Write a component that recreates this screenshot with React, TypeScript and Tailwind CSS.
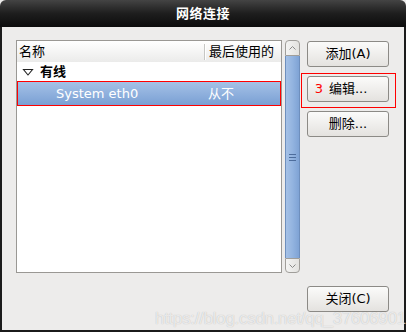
const cjk = "font-['DejaVu_Sans','Noto_Sans_CJK_SC',sans-serif]"

function Btn({ children, className = '' }: { children: React.ReactNode; className?: string }) {
  return (
    <button
      className={`w-[82px] h-[26px] rounded-[3px] border border-[#8c8a86] bg-gradient-to-b from-[#fbfbfa] to-[#e4e2df] text-[13px] text-black flex items-center justify-center ${className}`}
    >
      {children}
    </button>
  )
}

export default function App() {
  return (
    <div className={`w-[406px] h-[332px] bg-[#edeceb] ${cjk} flex flex-col relative overflow-hidden`}>
      {/* title bar */}
      <div className="h-[27px] shrink-0 rounded-t-[6px] bg-gradient-to-b from-[#444] via-[#1e1e1e] to-[#0c0c0c] flex items-center justify-center">
        <span className="text-white font-bold text-[13px] tracking-[0.5px]">网络连接</span>
      </div>
      <div className="flex-1 border-x-2 border-b-2 border-[#1b1b1b] flex flex-col">
        <div className="flex pl-[14px] pt-[13px]">
          {/* list */}
          <div className="w-[266px] h-[233px] border border-[#9a9894] bg-white flex flex-col">
            <div className="h-[21px] flex items-center bg-gradient-to-b from-white to-[#ebebea] text-[13px] text-black">
              <div className="w-[187px] pl-[2px]">名称</div>
              <div className="w-[2px] h-[16px] border-l border-[#c6c6c4] bg-white mr-[3px]" />
              <div>最后使用的</div>
            </div>
            <div className="h-[19px] flex items-center text-[13px] font-bold">
              <svg width="12" height="10" viewBox="0 0 12 10" className="ml-[5px] mr-[6px]">
                <path d="M1.5 2.5 H10.5 L6 8 Z" fill="none" stroke="#222" strokeWidth="1.1" />
              </svg>
              <span>有线</span>
            </div>
            <div className="h-[25px] flex items-center outline outline-1 -outline-offset-1 outline-[#ff0000] bg-gradient-to-b from-[#a7c3e7] to-[#789ed3] text-white text-[13px]">
              <div className="w-[191px] pl-[39px]">System eth0</div>
              <div>从不</div>
            </div>
          </div>
          {/* scrollbar */}
          <div className="ml-[3px] w-[15px] h-[233px] flex flex-col">
            <div className="h-[16px] rounded-t-[4px] border border-[#a09e9a] bg-gradient-to-r from-[#f4f4f3] to-[#e3e2df] flex items-center justify-center">
              <svg width="7" height="4" viewBox="0 0 7 4"><path d="M0.5 3.5 L3.5 0.5 L6.5 3.5" fill="none" stroke="#8a8a88" strokeWidth="1" /></svg>
            </div>
            <div className="flex-1 border-x border-[#6e8fbd] bg-gradient-to-r from-[#a5c1e6] via-[#93b4e0] to-[#7fa3d5] flex items-center justify-center">
              <div className="flex flex-col gap-[2px]">
                <div className="w-[7px] h-[1px] bg-[#4d6d9c]" />
                <div className="w-[7px] h-[1px] bg-[#4d6d9c]" />
                <div className="w-[7px] h-[1px] bg-[#4d6d9c]" />
              </div>
            </div>
            <div className="h-[15px] rounded-b-[4px] border border-[#a09e9a] bg-gradient-to-r from-[#f4f4f3] to-[#e3e2df] flex items-center justify-center">
              <svg width="7" height="4" viewBox="0 0 7 4"><path d="M0.5 0.5 L3.5 3.5 L6.5 0.5" fill="none" stroke="#8a8a88" strokeWidth="1" /></svg>
            </div>
          </div>
          {/* buttons */}
          <div className="ml-[7px] pt-[1px] flex flex-col gap-[9px]">
            <Btn>添加(A)</Btn>
            <div className="relative">
              <Btn>
                <span className="text-[#ff0000] mr-[6px] ml-[-14px]">3</span>编辑...
              </Btn>
              <div className="absolute left-[-6px] top-[-3px] w-[95px] h-[35px] outline outline-1 -outline-offset-1 outline-[#ff0000] pointer-events-none" />
            </div>
            <Btn>删除...</Btn>
          </div>
        </div>
        <div className="flex justify-end pr-[15px] pt-[13px]">
          <Btn>关闭(C)</Btn>
        </div>
      </div>
      <div className="absolute left-[155px] top-[306px] text-[17px] text-white/70 font-['Liberation_Sans',sans-serif] [text-shadow:0_0_1px_rgba(0,0,0,0.25)] tracking-[-0.3px]">
        https://blog.csdn.net/qq_37606901
      </div>
    </div>
  )
}
